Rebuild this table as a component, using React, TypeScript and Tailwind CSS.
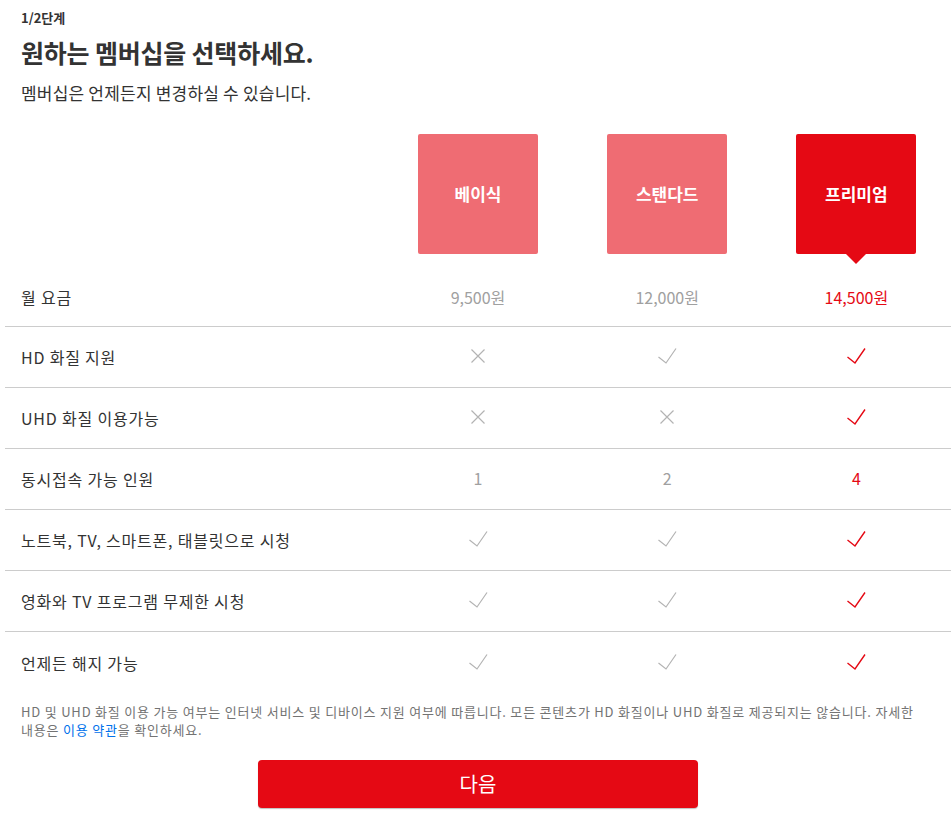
import React from "react";

const Check = ({ red }: { red?: boolean }) => (
  <svg width="20" height="18" viewBox="0 0 20 18" fill="none">
    <path d="M1.5 10 L9 16 L19 1.5" stroke={red ? "#e50914" : "#b3b3b3"} strokeWidth={red ? 1.4 : 1.2} />
  </svg>
);

const Cross = () => (
  <svg width="16" height="16" viewBox="0 0 16 16" fill="none">
    <path d="M1.5 1.5 L14.5 14.5 M14.5 1.5 L1.5 14.5" stroke="#b3b3b3" strokeWidth="1.2" />
  </svg>
);

type Cell = "check" | "checkRed" | "cross" | string;

const rows: { label: string; cells: Cell[] }[] = [
  { label: "HD 화질 지원", cells: ["cross", "check", "checkRed"] },
  { label: "UHD 화질 이용가능", cells: ["cross", "cross", "checkRed"] },
  { label: "동시접속 가능 인원", cells: ["1", "2", "4"] },
  { label: "노트북, TV, 스마트폰, 태블릿으로 시청", cells: ["check", "check", "checkRed"] },
  { label: "영화와 TV 프로그램 무제한 시청", cells: ["check", "check", "checkRed"] },
  { label: "언제든 해지 가능", cells: ["check", "check", "checkRed"] },
];

function renderCell(c: Cell, i: number) {
  if (c === "check") return <Check />;
  if (c === "checkRed") return <Check red />;
  if (c === "cross") return <Cross />;
  return (
    <span className={i === 2 ? "text-[#e50914] text-[16px]" : "text-[#a0a0a0] text-[16px]"}>{c}</span>
  );
}

export default function App() {
  return (
    <div
      className="w-[951px] h-[815px] bg-white text-[#333333] overflow-hidden"
      style={{ fontFamily: '"Noto Sans CJK KR", "Noto Sans", sans-serif' }}
    >
      <div className="pl-[5px]">
        <div className="pl-[16px] pt-[9px]">
          <div className="text-[13px] font-bold leading-[18px] text-[#333333]">1/2단계</div>
          <h1 className="mt-[8px] text-[25px] font-bold leading-[34px] tracking-[-0.2px] text-[#333333]">
            원하는 멤버십을 선택하세요.
          </h1>
          <p className="mt-[12px] text-[17px] leading-[24px] tracking-[0.2px] text-[#333333]">
            멤버십은 언제든지 변경하실 수 있습니다.
          </p>
        </div>

        <div className="mt-[29px] w-[946px]">
          {/* plan boxes */}
          <div className="flex">
            <div className="w-[40%]" />
            {["베이식", "스탠다드", "프리미엄"].map((p, i) => (
              <div key={p} className="w-[20%] flex justify-center">
                <div className="relative">
                  <div
                    className={
                      "w-[120px] h-[120px] rounded-[2px] flex items-center justify-center text-white font-bold text-[17px] " +
                      (i === 2 ? "bg-[#e50914]" : "bg-[#ef6c73]")
                    }
                  >
                    {p}
                  </div>
                  {i === 2 && (
                    <div className="absolute left-1/2 -translate-x-1/2 top-full w-0 h-0 border-l-[10px] border-r-[10px] border-t-[10px] border-l-transparent border-r-transparent border-t-[#e50914]" />
                  )}
                </div>
              </div>
            ))}
          </div>

          {/* price row */}
          <div className="flex items-center h-[73px] pt-[14px] border-b border-[#cccccc]">
            <div className="w-[40%] pl-[16px] text-[16px] tracking-[0.8px]">월 요금</div>
            {["9,500원", "12,000원", "14,500원"].map((p, i) => (
              <div
                key={p}
                className={
                  "w-[20%] text-center text-[16px] " + (i === 2 ? "text-[#e50914]" : "text-[#a0a0a0]")
                }
              >
                {p}
              </div>
            ))}
          </div>

          {rows.map((r, ri) => (
            <div
              key={r.label}
              className={
                "flex items-center h-[61px] " + (ri < rows.length - 1 ? "border-b border-[#cccccc]" : "")
              }
            >
              <div className="w-[40%] pl-[16px] text-[16px] tracking-[0.8px] text-[#333333]">{r.label}</div>
              {r.cells.map((c, i) => (
                <div key={i} className="w-[20%] flex justify-center items-center -mt-[2px]">
                  {renderCell(c, i)}
                </div>
              ))}
            </div>
          ))}
        </div>

        <p className="mt-[10px] pl-[16px] w-[920px] text-[13px] leading-[18px] text-[#737373] tracking-[0.8px] break-keep">
          HD 및 UHD 화질 이용 가능 여부는 인터넷 서비스 및 디바이스 지원 여부에 따릅니다. 모든 콘텐츠가 HD 화질이나 UHD 화질로 제공되지는 않습니다. 자세한 내용은{" "}
          <span className="text-[#0071eb]">이용 약관</span>을 확인하세요.
        </p>

        <div className="w-[946px] flex justify-center mt-[21px]">
          <button className="w-[440px] h-[48px] rounded-[4px] bg-[#e50914] text-white text-[20px] shadow-[0_1px_1px_rgba(0,0,0,0.25)]">
            다음
          </button>
        </div>
      </div>
    </div>
  );
}
